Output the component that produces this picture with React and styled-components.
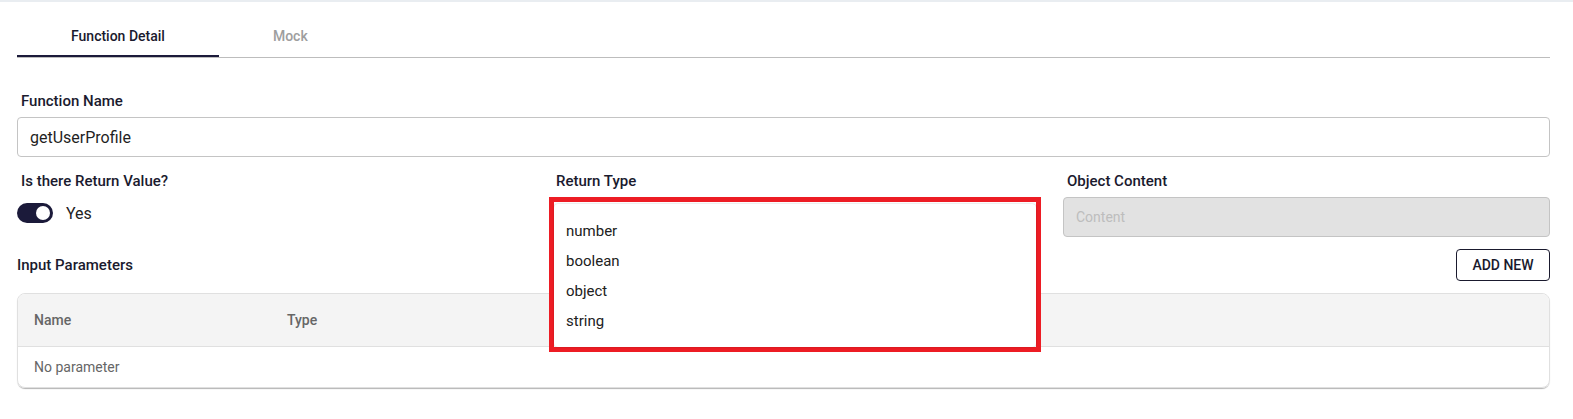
import React, { useState } from 'react';
import styled, { createGlobalStyle } from 'styled-components';

const GlobalStyle = createGlobalStyle`
  body {
    margin: 0;
    background: #ffffff;
    font-family: Roboto, "Liberation Sans", Arial, sans-serif;
    color: #1a1a2e;
  }
  * {
    box-sizing: border-box;
  }
`;

const TopStrip = styled.div`
  height: 2px;
  background: #e9edf1;
`;

const Page = styled.div`
  padding: 0 23px 20px 17px;
`;

const TabBar = styled.div`
  display: flex;
  margin-top: 15px;
  border-bottom: 1px solid #bdbdbd;
`;

const Tab = styled.button`
  height: 40px;
  padding: 0 54px;
  border: none;
  background: none;
  font-family: inherit;
  font-size: 14px;
  font-weight: 500;
  cursor: pointer;
  color: ${({ $active }) => ($active ? '#1a1a2e' : '#9e9e9e')};
  border-bottom: 2px solid ${({ $active }) => ($active ? '#1b1a3a' : 'transparent')};
`;

const Label = styled.div`
  font-size: 15px;
  line-height: 20px;
  font-weight: 500;
  color: #1a1a2e;
  padding-left: ${({ $flush }) => ($flush ? '0' : '4px')};
`;

const Field = styled.div`
  margin-top: 33px;
  display: flex;
  flex-direction: column;
  gap: 6px;
`;

const TextInput = styled.input`
  height: 40px;
  width: 100%;
  padding: 0 12px;
  border: 1px solid #c4c4c4;
  border-radius: 4px;
  font-family: inherit;
  font-size: ${({ disabled }) => (disabled ? '14px' : '16px')};
  color: #1f1f1f;
  background: ${({ disabled }) => (disabled ? '#e2e2e2' : '#ffffff')};
  outline: none;

  &::placeholder {
    color: #bdbdbd;
  }
`;

const OptionsRow = styled.div`
  margin-top: 14px;
  display: grid;
  grid-template-columns: 535px 511px 1fr;
  align-items: start;
`;

const Column = styled.div`
  position: relative;
  display: flex;
  flex-direction: column;
  gap: ${({ $gap }) => $gap || 6}px;
`;

const SwitchRow = styled.div`
  display: flex;
  align-items: center;
  gap: 13px;
  font-size: 16px;
  color: #222222;
`;

const Switch = styled.div`
  width: 36px;
  height: 20px;
  border-radius: 10px;
  background: #1b1a3a;
  display: flex;
  align-items: center;
  justify-content: ${({ $on }) => ($on ? 'flex-end' : 'flex-start')};
  padding: 3px;
  cursor: pointer;
`;

const Knob = styled.span`
  width: 14px;
  height: 14px;
  border-radius: 50%;
  background: #ffffff;
`;

const Highlight = styled.div`
  position: absolute;
  top: 26px;
  left: -3px;
  width: 492px;
  border: 5px solid #ed1c24;
  background: #ffffff;
  z-index: 10;
`;

const Menu = styled.ul`
  list-style: none;
  margin: 2px 0 0;
  padding: 12px 0 11px;
  border-radius: 4px;
  box-shadow: 0 0 2px rgba(0, 0, 0, 0.25);
  background: #ffffff;
`;

const MenuItem = styled.li`
  height: 30px;
  line-height: 30px;
  padding: 0 12px;
  font-size: 15px;
  color: #212121;
  cursor: pointer;
`;

const Toolbar = styled.div`
  margin-top: 12px;
  display: flex;
  align-items: center;
  justify-content: space-between;
`;

const OutlineButton = styled.button`
  height: 32px;
  width: 94px;
  border: 1px solid #1a1a2e;
  border-radius: 4px;
  background: #ffffff;
  font-family: inherit;
  font-size: 14px;
  font-weight: 500;
  color: #1a1a2e;
  text-transform: uppercase;
  cursor: pointer;
`;

const TableCard = styled.div`
  margin-top: 12px;
  border: 1px solid #e0e0e0;
  border-radius: 8px;
  overflow: hidden;
  box-shadow: 0 2px 1px -1px rgba(0, 0, 0, 0.2), 0 1px 1px 0 rgba(0, 0, 0, 0.12);
`;

const HeaderRow = styled.div`
  display: flex;
  align-items: center;
  height: 53px;
  background: #f4f4f4;
  border-bottom: 1px solid #e0e0e0;
`;

const BodyRow = styled.div`
  display: flex;
  align-items: center;
  height: 40px;
`;

const Cell = styled.div`
  width: ${({ $w }) => ($w ? `${$w}px` : 'auto')};
  padding: 0 16px;
  font-size: 14px;
  font-weight: ${({ $head }) => ($head ? 500 : 400)};
  color: #666666;
`;

const returnTypes = ['number', 'boolean', 'object', 'string'];

export default function App() {
  const [tab, setTab] = useState('detail');
  const [hasReturn, setHasReturn] = useState(true);

  return (
    <>
      <GlobalStyle />
      <TopStrip />
      <Page>
        <TabBar>
          <Tab $active={tab === 'detail'} onClick={() => setTab('detail')}>Function Detail</Tab>
          <Tab $active={tab === 'mock'} onClick={() => setTab('mock')}>Mock</Tab>
        </TabBar>

        <Field>
          <Label>Function Name</Label>
          <TextInput defaultValue="getUserProfile" />
        </Field>

        <OptionsRow>
          <Column $gap={12}>
            <Label>Is there Return Value?</Label>
            <SwitchRow>
              <Switch $on={hasReturn} onClick={() => setHasReturn(!hasReturn)}>
                <Knob />
              </Switch>
              {hasReturn ? 'Yes' : 'No'}
            </SwitchRow>
          </Column>
          <Column>
            <Label>Return Type</Label>
            <Highlight>
              <Menu>
                {returnTypes.map((t) => (
                  <MenuItem key={t}>{t}</MenuItem>
                ))}
              </Menu>
            </Highlight>
          </Column>
          <Column>
            <Label>Object Content</Label>
            <TextInput disabled placeholder="Content" />
          </Column>
        </OptionsRow>

        <Toolbar>
          <Label $flush>Input Parameters</Label>
          <OutlineButton>Add New</OutlineButton>
        </Toolbar>

        <TableCard>
          <HeaderRow>
            <Cell $head $w={253}>Name</Cell>
            <Cell $head>Type</Cell>
          </HeaderRow>
          <BodyRow>
            <Cell>No parameter</Cell>
          </BodyRow>
        </TableCard>
      </Page>
    </>
  );
}
